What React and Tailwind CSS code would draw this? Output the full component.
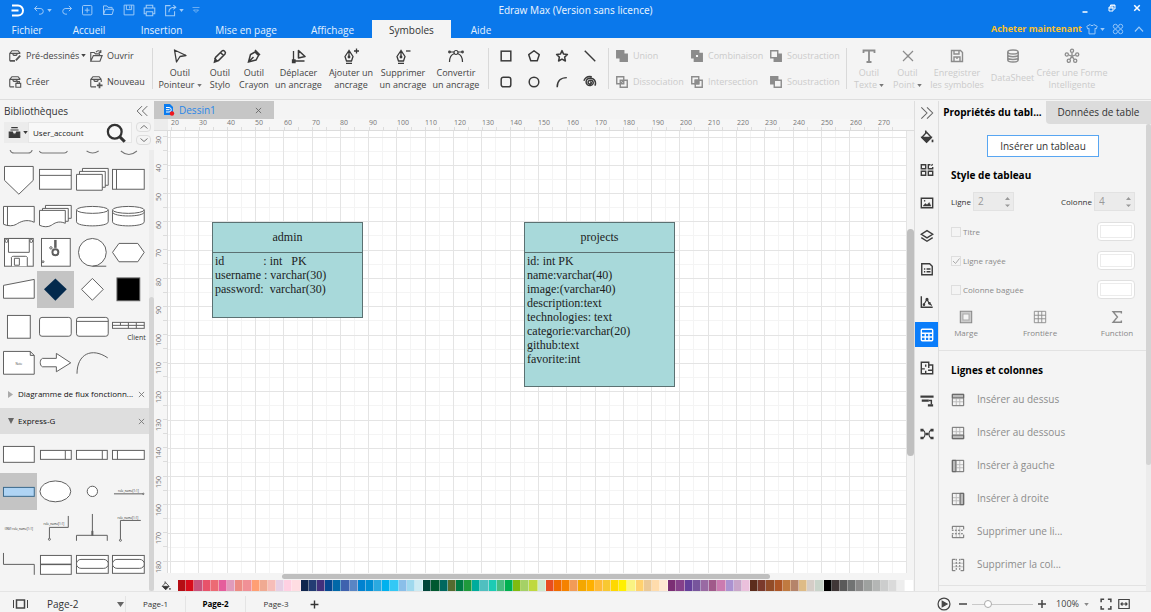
import React from "react";

/* ---------- drawing helpers ---------- */

function Ico({ s = 14, children, sw = 1.3, className = "", fill = "none" }) {
  return (
    <svg
      width={s}
      height={s}
      viewBox="0 0 16 16"
      fill={fill}
      stroke="currentColor"
      strokeWidth={sw}
      className={"shrink-0 " + className}
      aria-hidden="true"
    >
      {children}
    </svg>
  );
}

function Caret({ className = "" }) {
  return (
    <svg width="5" height="3" viewBox="0 0 6 4" fill="currentColor" className={"shrink-0 " + className} aria-hidden="true">
      <path d="M0 0h6L3 4z" />
    </svg>
  );
}

/* ---------- header ---------- */

const menuTabs = [
  ["Fichier", "w-[54px]"],
  ["Accueil", "w-[70px]"],
  ["Insertion", "w-[75px]"],
  ["Mise en page", "w-[94px]"],
  ["Affichage", "w-[79px]"],
  ["Symboles", "w-[79px]"],
  ["Aide", "w-[60px]"],
];

function Header() {
  return (
    <header className="bg-[#0a78eb] text-[#e3f0fd]">
      <div className="grid h-5 grid-cols-[1fr_auto_1fr] items-center">
        <div className="flex items-center pl-2.5 text-[#9fcbf8]">
          <svg width="15" height="13" viewBox="0 0 15 13" fill="none" stroke="#fff" strokeWidth="2" aria-hidden="true">
            <path d="M2 1.500h6a5 5 0 0 1 0 10H2M1.500 6.500h7" />
          </svg>
          <button aria-label="Annuler" className="ml-2 flex items-center gap-0.5">
            <Ico s={12}><path d="M5.500 2.500L2 6l3.500 3.500M2 6h8.500a3.800 3.800 0 0 1 0 7.500H8" /></Ico>
            <Caret />
          </button>
          <button aria-label="Rétablir" className="ml-[9px]">
            <Ico s={12}><path d="M10.500 2.500L14 6l-3.500 3.500M14 6H5.500a3.800 3.800 0 0 0 0 7.500H8" /></Ico>
          </button>
          <button aria-label="Nouveau" className="ml-2">
            <Ico s={12}><rect x="2" y="2" width="12.500" height="12.500" rx="1.500" /><path d="M8.200 5v6.500M5 8.200h6.500" /></Ico>
          </button>
          <button aria-label="Ouvrir" className="ml-[9px]">
            <Ico s={12}><path d="M2 14V2.500h4.500L8 4.500h5.500V7M2 14l2.500-7h11L13.500 14z" /></Ico>
          </button>
          <button aria-label="Enregistrer" className="ml-[9px]">
            <Ico s={12}><path d="M1.500 1.500h13v13h-13zM4.500 1.500v6h7v-6M9 3v3" /></Ico>
          </button>
          <button aria-label="Imprimer" className="ml-2">
            <Ico s={13}><path d="M4 5V1.500h8V5M4 12H1.500V5h13v7H12M4 9.500h8v5H4z" /></Ico>
          </button>
          <button aria-label="Exporter" className="ml-2 flex items-center gap-0.5">
            <Ico s={13}><path d="M8 2H2v12.500h11V9M6 10c0-4 3-6 8-6M11.500 1.500L14.500 4l-3 2.500" /></Ico>
            <Caret />
          </button>
          <button aria-label="Personnaliser" className="ml-2">
            <Ico s={8}><path d="M1 3h14M3 8l5 5 5-5z" /></Ico>
          </button>
        </div>
        <h1 className="font-sans text-[10px] leading-5">Edraw Max (Version sans licence)</h1>
        <div className="flex items-center justify-end gap-[17px] pr-2.5 text-white">
          <button aria-label="Réduire"><Ico s={8} sw={3}><path d="M3 12h10" /></Ico></button>
          <button aria-label="Restaurer" className="mb-1 ml-0.5"><Ico s={8} sw={2}><path d="M2 6h8v8H2zM2 8h8M5 5V2h9v8h-3M5 3.500h9" /></Ico></button>
          <button aria-label="Fermer" className="mb-1"><Ico s={8} sw={3}><path d="M2.500 2.500l11 11M13.500 2.500l-11 11" /></Ico></button>
        </div>
      </div>
      <div className="flex h-[18px] items-stretch text-[10px]">
        <nav className="flex">
          {menuTabs.map(([t, w]) => (
            <button
              key={t}
              className={w + " pt-px leading-4 " + (t === "Symboles" ? "bg-[#f4f4f4] text-[#333]" : "")}
            >
              {t}
            </button>
          ))}
        </nav>
        <div className="ml-auto flex items-center pr-[7px] text-[#9fcbf8]">
          <a href="#acheter" className="text-[9px] font-bold text-[#fbc02d]">Acheter maintenant</a>
          <button aria-label="Thème" className="ml-1 flex items-center gap-0.5">
            <Ico s={12}><path d="M5.500 2L1 4.500l1.500 3.500L4 7v7.500h8V7l1.500 1L15 4.500 10.500 2c-.5 2-4.500 2-5 0z" /></Ico>
            <Caret />
          </button>
          <button aria-label="Applications" className="ml-[7px]">
            <Ico s={12} sw={1.2}><circle cx="4.500" cy="4.500" r="2.800" /><circle cx="11.500" cy="4.500" r="2.800" /><circle cx="4.500" cy="11.500" r="2.800" /><circle cx="11.500" cy="11.500" r="2.800" /></Ico>
          </button>
          <button aria-label="Replier le ruban" className="ml-2.5">
            <Ico s={10} sw={1.8}><path d="M1.500 12L8 5l6.500 7" /></Ico>
          </button>
        </div>
      </div>
    </header>
  );
}

/* ---------- ribbon ---------- */

const boxBase = "M2 13.500V5l2.500-3h7L14 5M2 5h12M5.500 5c0 3 5 3 5 0";

function Divider() {
  return <div className="my-2.5 w-px bg-[#d9d9d9]" />;
}

function SmallCmd({ icon, children, caret }) {
  return (
    <button className="flex items-center gap-1 whitespace-nowrap">
      {icon}
      <span>{children}</span>
      {caret && <Caret className="-ml-0.5" />}
    </button>
  );
}

function Tool({ icon, lines, w, caret, disabled }) {
  return (
    <button
      disabled={disabled}
      className={w + " flex shrink-0 flex-col items-center pt-2.5 " + (disabled ? "text-[#cbcbcb]" : "text-[#444]")}
    >
      <span className={disabled ? "text-[#8c8c8c]" : "text-[#3a3a3a]"}>{icon}</span>
      <span className={"flex flex-col items-center whitespace-nowrap leading-3 " + (lines.length === 1 ? "pt-2" : "pt-[3px]")}>
        {lines.map((l, i) => (
          <span key={l} className="flex items-center gap-0.5">
            {l}
            {caret && i === lines.length - 1 && <Caret className="text-[#777]" />}
          </span>
        ))}
      </span>
    </button>
  );
}

const nib = (
  <>
    <path d="M8 1.500L4 7.500l1.500 4.500h5L12 7.500zM8 2v6M5 14.500h6" />
    <circle cx="8" cy="8" r=".8" />
  </>
);

function Ribbon() {
  return (
    <section className="flex h-[62px] border-b border-[#dedede] text-[9px] text-[#444]">
      <div className="grid w-[152px] shrink-0 grid-cols-[81px_auto] content-center justify-start gap-y-3 pl-2 leading-[14px]">
        <SmallCmd caret icon={<Ico s={14} className="text-[#555]"><path d={boxBase} /><path d="M2 13.500h6M9 13l5-5.500" strokeWidth="2" /></Ico>}>Pré-dessinés</SmallCmd>
        <SmallCmd icon={<Ico s={14} className="text-[#555]"><path d="M2 14V4h4l1.500 1.500H12V8M2 14l3-6.500h10L12.500 14zM8 3.500c2-2 4-2 5.500 0M13.500 1v3H11" /></Ico>}>Ouvrir</SmallCmd>
        <SmallCmd icon={<Ico s={14} className="text-[#555]"><path d={boxBase} /><path d="M2 13.500h5M9 9.500h5.500V14H9zM10.500 9.500v-2h2.500v2" /></Ico>}>Créer</SmallCmd>
        <SmallCmd icon={<Ico s={14} className="text-[#555]"><path d={boxBase} /><path d="M2 13.500h6M14 5v3" /><path d="M12 8.500v6.500M9 11.800h6.500" strokeWidth="2" /></Ico>}>Nouveau</SmallCmd>
      </div>
      <Divider />
      <div className="flex w-[335px] shrink-0 pl-1">
        <Tool w="w-[46px]" caret lines={["Outil", "Pointeur"]} icon={<Ico s={16}><path d="M2.500 2l11.500 5.500-6 1L4.500 14z" strokeLinejoin="round" /></Ico>} />
        <Tool w="w-[34px]" lines={["Outil", "Stylo"]} icon={<Ico s={16} sw={1.5}><path d="M2.500 14l1-4.500L10 3c1.500-1.500 4.500 1 3 3L6.500 12.500zM8.500 4.500l3 3M5 13l-2.500-3" /></Ico>} />
        <Tool w="w-[34px]" lines={["Outil", "Crayon"]} icon={<Ico s={16} sw={1.5}><path d="M2.500 14l2-7.500L9 4l3.500 3.500L10 12zM9 2l5 5M2.500 14l5-5" /></Ico>} />
        <Tool w="w-[55px]" lines={["Déplacer", "un ancrage"]} icon={<Ico s={16}><path d="M2.500 3v10h11M1.500 12h2.500v2.500H1.500z" /><path d="M7.500 2.500v7.500l6.500-1.500z" strokeWidth="1.600" strokeLinejoin="round" /></Ico>} />
        <Tool w="w-[50px]" lines={["Ajouter un", "ancrage"]} icon={<Ico s={16}><g transform="translate(-2 1)">{nib}</g><path d="M11 3h5M13.500 .5v5" /></Ico>} />
        <Tool w="w-[54px]" lines={["Supprimer", "un ancrage"]} icon={<Ico s={16}><g transform="translate(-2 1)">{nib}</g><path d="M11 3h4.500" /></Ico>} />
        <Tool w="w-[52px]" lines={["Convertir", "un ancrage"]} icon={<Ico s={16} sw={1.2}><path d="M1.500 14c0-4 1.500-7.500 5-8.500M14.500 14c0-4-1.500-7.500-5-8.500M2 4h4M10 4h4" /><circle cx="8" cy="4.500" r="2" /><circle cx="1.500" cy="4" r=".8" /><circle cx="14.500" cy="4" r=".8" /></Ico>} />
      </div>
      <Divider />
      <div className="grid w-[119px] shrink-0 grid-cols-[28px_28px_28px_28px] content-center gap-y-3 pl-[3px] text-[#3a3a3a]">
        {[
          ["Rectangle", <rect x="2.500" y="2.500" width="11" height="11" />],
          ["Pentagone", <path d="M8 2l6 4.500-2.300 7H4.300L2 6.500z" strokeLinejoin="round" />],
          ["Étoile", <path d="M8 1.800l1.800 4 4.400.5-3.200 3 .9 4.400L8 11.500l-3.900 2.200.9-4.400-3.200-3 4.400-.5z" strokeLinejoin="round" />],
          ["Ligne", <path d="M2 2l12 12" />],
          ["Rectangle arrondi", <rect x="2.500" y="2.500" width="11" height="11" rx="2.500" />],
          ["Ellipse", <circle cx="8" cy="8" r="5.500" />],
          ["Arc", <path d="M2.500 14c0-7 4-11 11-11" />],
          ["Spirale", <path d="M8 8.200c1.200-.6 2 .8 1 1.700s-3.200.3-3.200-1.500S7.500 5.800 9.300 6s3 2.400 2 4.300-4.300 2.500-6.300.8-2-5 .3-6.600 6.200-1 7.700 1.200 1.500 4.800.5 6.500M1 6.500c1.500-3.500 5-5.500 9-4.500" />],
        ].map(([n, d]) => (
          <button key={n} aria-label={n} className="flex h-3.5 items-center justify-center">
            <Ico s={14} sw={1.7}>{d}</Ico>
          </button>
        ))}
      </div>
      <Divider />
      <div className="grid w-[237px] shrink-0 grid-cols-[75px_79px_auto] content-center justify-start gap-y-3 pl-1.5 leading-[14px] text-[#cbcbcb]">
        {[
          ["Union", <><path d="M2 2h8v8H2zM6 6h8v8H6z" fill="currentColor" /></>],
          ["Combinaison", <path d="M2 2h8v3h4v9H5v-4H2zM6 6v4h4V6z" fill="currentColor" fillRule="evenodd" />],
          ["Soustraction", <><path d="M6 10v4h8V6h-4v4z" fill="currentColor" /><path d="M2 2h8v8H2z" /></>],
          ["Dissociation", <><path d="M2 2h8v8H2zM6 6h8v8H6zM6.500 9.500l3-3" /></>],
          ["Intersection", <><path d="M2 2h8v8H2zM6 6h8v8H6z" /><path d="M6 6h4v4H6z" fill="currentColor" /></>],
          ["Soustraction", <><path d="M2 2h8v4H6v4H2z" fill="currentColor" /><path d="M6 6h8v8H6z" /></>],
        ].map(([n, d], i) => (
          <button key={i} disabled className="flex items-center gap-1">
            <Ico s={14} sw={1.6} className="text-[#8c8c8c]">{d}</Ico>
            {n}
          </button>
        ))}
      </div>
      <Divider />
      <div className="flex pl-[3px]">
        <Tool disabled w="w-[38px]" caret lines={["Outil", "Texte"]} icon={<Ico s={16} sw={1.8}><path d="M2.500 5V2.500h11V5M8 2.500V14M5.500 14h5" /></Ico>} />
        <Tool disabled w="w-[39px]" caret lines={["Outil", "Point"]} icon={<Ico s={16} sw={1.2}><path d="M3 3l10 10M13 3L3 13" /><path d="M7 8h2" strokeWidth="2.500" /></Ico>} />
        <Tool disabled w="w-[60px]" lines={["Enregistrer", "les symboles"]} icon={<Ico s={16} sw={1.4}><path d="M2.500 2.500h9l2 2v9h-11zM5 2.500v3.500h5V2.500M5 13.500V9h6v4.500M8 9v2" /></Ico>} />
        <Tool disabled w="w-[51px]" lines={["DataSheet"]} icon={<Ico s={16} sw={1.5}><ellipse cx="8" cy="4" rx="5.200" ry="2" /><path d="M2.800 4v8c0 2.700 10.400 2.700 10.400 0V4M2.800 6.800c0 2.500 10.400 2.500 10.400 0M2.800 9.500c0 2.500 10.400 2.500 10.400 0" /></Ico>} />
        <Tool disabled w="w-[68px]" lines={["Créer une Forme", "Intelligente"]} icon={<Ico s={16} sw={1.3}><circle cx="8" cy="2.800" r="1.600" /><circle cx="2.800" cy="6.500" r="1.600" /><circle cx="13.200" cy="6.500" r="1.600" /><circle cx="4.800" cy="12.800" r="1.600" /><circle cx="11.200" cy="12.800" r="1.600" /><path d="M8 5v3M5 7l3 1.500L11 7M8 8.500L6 11M8 8.500l2 2.500" /></Ico>} />
      </div>
    </section>
  );
}

/* ---------- symbol library ---------- */

function Shape({ label, selected, children }) {
  return (
    <button
      aria-label={label}
      className={"flex items-center justify-center overflow-hidden " + (selected ? "bg-[#c4c4c4]" : "")}
    >
      <svg viewBox="0 0 37 37" className="h-full w-full" fill="#fff" stroke="#5f5f5f" strokeWidth="1" aria-hidden="true">
        {children}
      </svg>
    </button>
  );
}

const flowShapes = [
  ["Renvoi", <path d="M4.500 5.500h29v14l-14.500 14-14.500-14z" />],
  ["Cadre", <><rect x="2.500" y="8.500" width="32" height="20" /><path d="M2.500 14.500h32" /></>],
  ["Documents", <><path d="M8.500 7.500h26v17h-26z" /><path d="M5.500 10.500h26v16h-26z" /><path d="M2.500 13.500h26v16h-26z" /></>],
  ["Processus", <><rect x="2.500" y="8.500" width="32" height="20" /><path d="M6.500 8.500v20" /></>],
  ["Document", <><path d="M3.500 8.500h31v16c-8-4-15 0-18 2s-9 2-13 0z" /><path d="M7.500 8.500v19" /></>],
  ["Documents multiples", <><path d="M8.500 7.500h26v13h-26z" /><path d="M5.500 10.500h26v13h-26z" /><path d="M2.500 12.500h26v13c-7-3-11 0-14 2s-8 2-12 0z" /></>],
  ["Stockage", <><path d="M2.500 12v12c0 5.500 32 5.500 32 0V12" /><ellipse cx="18.500" cy="12" rx="16" ry="3.500" /></>],
  ["Base de données", <><path d="M2.500 12v12c0 5.500 32 5.500 32 0V12" /><path d="M2.500 14c0 5.500 32 5.500 32 0" /><ellipse cx="18.500" cy="12" rx="16" ry="3.500" /></>],
  ["Disquette", <><rect x="4.500" y="4.500" width="29" height="28" /><path d="M8.500 4.500h21v14h-21zM11.500 32.500v-9a2 2 0 0 1 2-1h12a2 2 0 0 1 2 1v9M14.500 24.500h5v7h-5z" /><circle cx="6.500" cy="7" r="1.500" /><circle cx="31.500" cy="7" r="1.500" /></>],
  ["Verrou", <><rect x="4.500" y="4.500" width="29" height="28" /><path d="M18.500 6v8" strokeWidth="2.500" /><circle cx="18.500" cy="18.500" r="3" strokeWidth="2" /><circle cx="14" cy="14" r="1.200" /><circle cx="6" cy="28" r="1" /></>],
  ["Bande", <><circle cx="18.500" cy="18.500" r="14" /><path d="M18.500 32.500h14" /></>],
  ["Hexagone", <path d="M9 9.500h19l6.500 9-6.500 9.500H9l-6.500-9.500z" />],
  ["Saisie manuelle", <path d="M3.500 14.500l31-6v19h-31z" />],
  ["Losange plein", <path d="M18.500 7.500l11.500 11-11.500 11.500L7 18.500z" fill="#042a4d" stroke="none" />, true],
  ["Losange", <path d="M18.500 7.500l11 11-11 11-11-11z" />],
  ["Carré plein", <rect x="7" y="7" width="23" height="23" fill="#000" />],
  ["Carré", <rect x="7.500" y="7.500" width="23" height="23" />],
  ["Rectangle arrondi", <rect x="2.500" y="9.500" width="32" height="19" rx="2.500" />],
  ["Cadre arrondi", <><rect x="2.500" y="9.500" width="32" height="19" rx="2.500" /><path d="M2.500 13.500h32" /></>],
  ["Client", <><rect x="2.500" y="14.500" width="32" height="6" /><path d="M2.500 17.500h32M10.500 14.500v3M18.500 14.500v6M26.500 14.500v6" /><text x="36" y="32" textAnchor="end" fontSize="7" fill="#333" stroke="none">Client</text></>],
  ["Note", <><path d="M3.500 7.500h27l4 4v19h-31zM30.500 7.500v4h4" /><text x="19" y="21" textAnchor="middle" fontSize="3" fill="#444" stroke="none">Note</text></>],
  ["Flèche", <path d="M5.500 14.500h14v-5l14.500 9.500-14.500 9v-5h-14c-3-1-3-7.500 0-8.500z" />],
  ["Courbe", <path d="M3 30C3 10 18 3 34 14" fill="none" />],
];

const expressShapes = [
  ["Entité", <rect x="3.500" y="10.500" width="31" height="16" />],
  ["Type simple", <><rect x="3.500" y="14.500" width="31" height="9" /><path d="M28.500 14.500v9" /></>],
  ["Type énuméré", <><rect x="2.500" y="14.500" width="31" height="9" /><path d="M28.500 14.500v9" /></>],
  ["Type sélection", <><rect x="2.500" y="14.500" width="32" height="9" /><path d="M7.500 14.500v9" /></>],
  ["Type défini", <rect x="3.500" y="14.500" width="31" height="9" fill="#afd4f4" stroke="#3b6a8c" />, true],
  ["Ellipse", <ellipse cx="18.500" cy="18.500" rx="15.500" ry="10.500" />],
  ["Cercle", <circle cx="18.500" cy="18.500" r="5.200" />],
  ["Relation", <><path d="M4 21h29" /><circle cx="33.500" cy="21" r=".7" /><text x="18.500" y="19" textAnchor="middle" fontSize="3" fill="#222" stroke="none">role_name[1:1]</text></>],
  ["Relation inverse", <text x="19" y="20" textAnchor="middle" fontSize="3" fill="#222" stroke="none">(INV) role_name[1:1]</text>],
  ["Connecteur", <><path d="M31.500 6v11.500h-19V29" fill="none" /><circle cx="12.500" cy="29.500" r="1" /><text x="17" y="15" textAnchor="middle" fontSize="3" fill="#222" stroke="none">role_name[1:1]</text></>],
  ["Arbre", <><path d="M18.500 4v21M2.500 31v-5.500h31V31" fill="none" /><path d="M18.500 21v5" strokeWidth="2" /></>],
  ["Connecteur nommé", <><path d="M31 10.500H10.500V30" fill="none" /><circle cx="10.500" cy="30.500" r="1" /><text x="18" y="9" textAnchor="middle" fontSize="3" fill="#222" stroke="none">role_name[1:1]</text></>],
  ["Coude", <path d="M3.500 7v11.500h31V29" fill="none" />],
  ["Schéma", <><rect x="3.500" y="9.500" width="31" height="19" /><path d="M3.500 18.500h31" strokeWidth="1.500" /></>],
  ["Référence", <><rect x="2.500" y="9.500" width="32" height="18" /><rect x="2.500" y="13.500" width="32" height="9" rx="4.500" /></>],
  ["Utilisation", <><rect x="2.500" y="9.500" width="32" height="18" /><rect x="2.500" y="13.500" width="32" height="9" rx="4.500" /></>],
];

function Library() {
  return (
    <aside className="flex w-[154px] shrink-0 flex-col overflow-hidden text-[#333]">
      <div className="flex h-[19px] shrink-0 items-center justify-between pl-1 pr-1.5">
        <h2 className="text-[10px] leading-4">Bibliothèques</h2>
        <button aria-label="Replier" className="text-[#666]"><Ico s={12}><path d="M8 1.500L1.500 8 8 14.500M15 1.500L8.500 8l6.500 6.500" /></Ico></button>
      </div>
      <div className="mt-0.5 flex h-[21px] shrink-0 items-stretch pl-1 pr-[3px]">
        <button aria-label="Choisir une bibliothèque" className="flex w-6 items-center gap-0.5 bg-[#ececec] pl-1 text-[#3a3a3a]">
          <Ico s={13} sw={1.3}><path d="M4 2h8M3 5h10" /><path d="M1.500 7.500h4L6.500 10h3l1-2.500h4v6.500h-13z" fill="currentColor" /></Ico>
          <Caret />
        </button>
        <label className="flex w-[104px] items-center border border-[#e6e6e6] bg-[#f8f8f8] pl-1">
          <input aria-label="Rechercher un symbole" defaultValue="User_account" className="w-full min-w-0 flex-1 bg-transparent text-[8px] text-[#222] outline-none" />
          <Ico s={20} sw={1.8} className="mr-[5px] text-[#333]"><circle cx="7" cy="7" r="5.500" /><path d="M11 11l4 4" strokeWidth="2.500" /></Ico>
        </label>
        <div className="ml-1 flex flex-1 flex-col gap-[3px] text-[#777]">
          <button aria-label="Précédent" className="flex flex-1 items-center justify-center rounded-sm border border-[#ddd]"><Ico s={8} sw={2}><path d="M1 11l7-6 7 6" /></Ico></button>
          <button aria-label="Suivant" className="flex flex-1 items-center justify-center rounded-sm border border-[#ddd]"><Ico s={8} sw={2}><path d="M1 5l7 6 7-6" /></Ico></button>
        </div>
      </div>
      <div className="mt-[7px] flex min-h-0 flex-1">
        <div className="flex min-w-0 flex-1 flex-col">
          <svg className="h-[11px] w-full shrink-0" viewBox="0 0 148 11" preserveAspectRatio="none" fill="none" stroke="#777" aria-hidden="true">
            <path d="M10 0q1 3 4 3h14q3 0 4-3M39 1q1 2 3 2h22q2 0 3-2M86 1q6 4 12 0M120 1q8 7 16 0" />
          </svg>
          <div className="grid h-[220px] shrink-0 grid-cols-4 grid-rows-6 pr-0.5">
            {flowShapes.map(([n, d, sel]) => (
              <Shape key={n} label={n} selected={sel}>{d}</Shape>
            ))}
          </div>
          <div className="flex h-[27px] shrink-0 items-center pb-px pl-2 pr-1">
            <svg width="5" height="7" viewBox="0 0 5 7" fill="#aaa" aria-hidden="true"><path d="M0 0l5 3.500L0 7z" /></svg>
            <span className="ml-[5px] flex-1 whitespace-nowrap text-[8px] leading-3 text-[#111]">Diagramme de flux fonctionn...</span>
            <button aria-label="Fermer Diagramme de flux" className="text-[#777]"><Ico s={7} sw={2}><path d="M2 2l12 12M14 2L2 14" /></Ico></button>
          </div>
          <div className="flex h-[26px] shrink-0 items-center bg-[#dedede] pl-2 pr-1">
            <svg width="6" height="6" viewBox="0 0 6 6" fill="#666" aria-hidden="true"><path d="M0 0h6L3 6z" /></svg>
            <span className="ml-1 flex-1 text-[8px] leading-3 text-[#111]">Express-G</span>
            <button aria-label="Fermer Express-G" className="text-[#777]"><Ico s={7} sw={2}><path d="M2 2l12 12M14 2L2 14" /></Ico></button>
          </div>
          <div className="mt-[2px] grid h-[147px] shrink-0 grid-cols-4 grid-rows-4 pr-0.5">
            {expressShapes.map(([n, d, sel]) => (
              <Shape key={n} label={n} selected={sel}>{d}</Shape>
            ))}
          </div>
        </div>
        <div className="flex w-[5px] flex-col justify-end bg-[#ececec]">
          <div className="h-2/3 rounded bg-[#d4d4d4]" />
        </div>
      </div>
    </aside>
  );
}

/* ---------- drawing area ---------- */

const STEP = 28.3;
const range = (n) => Array.from({ length: n }, (_, i) => i);

function TopRuler() {
  return (
    <svg className="block h-3 w-full" aria-hidden="true">
      <rect width="14" height="12" fill="#ececec" />
      {range(26).map((i) => {
        const x = Math.round(16.5 + i * STEP);
        return (
          <g key={i}>
            <path d={`M${x + 0.5} 8v4M${x + 14.5} 8v4`} stroke="#dcdcdc" />
            <text x={x} y="6" fontSize="7" fill="#777">{20 + i * 10}</text>
          </g>
        );
      })}
      <path d="M0 11.500h4000" stroke="#dcdcdc" />
    </svg>
  );
}

function SideRuler() {
  return (
    <svg className="block h-full w-3.5 shrink-0" aria-hidden="true">
      {range(16).map((i) => {
        const y = Math.floor(5.500 + i * STEP);
        return (
          <g key={i}>
            <path d={`M9 ${y + 0.5}h5M9 ${y + 14.5}h5`} stroke="#dcdcdc" />
            <text transform={`translate(7 ${y}) rotate(-90)`} textAnchor="end" fontSize="7" fill="#777">{30 + i * 10}</text>
          </g>
        );
      })}
      <path d="M13.500 0v4000" stroke="#dcdcdc" />
    </svg>
  );
}

function Grid() {
  return (
    <svg className="block h-full w-full" shapeRendering="crispEdges" aria-hidden="true">
      {range(70).map((i) => {
        const x = Math.round(2 + i * STEP);
        const y = Math.round(5.500 + i * STEP);
        return <path key={i} d={`M${x + 14.5} 0v2000M0 ${y + 14.5}h4000`} stroke="#f4f4f4" />;
      })}
      {range(70).map((i) => {
        const x = Math.round(2 + i * STEP);
        const y = Math.round(5.500 + i * STEP);
        return <path key={i} d={`M${x + 0.5} 0v2000M0 ${y + 0.5}h4000`} stroke="#e4e4e4" />;
      })}
    </svg>
  );
}

function Entity({ name, rows, place }) {
  return (
    <div className={"absolute border border-[#5b7172] bg-[#a8d9da] font-['Liberation_Serif',serif] text-[12px] text-[#1c1c1c] " + place}>
      <div className="flex h-[30px] items-center justify-center border-b border-[#5b7172] pb-0.5">{name}</div>
      <div className="whitespace-pre pl-0.5 pt-px leading-[14px]">
        {rows.map((r) => <div key={r}>{r}</div>)}
      </div>
    </div>
  );
}

const palette = (
  "b50d14 d70b1b c8527b e8526a ec6a74 e55d9c e09bbb ec8b83 f09096 ff9f73 f0aa92 f6bdb8 e6cfe4 ffd0e2 ffdde2 " +
  "10264e 233c73 42307c 064790 0068a8 3f62ae 5a85c4 0082d0 008dd3 2ba9e0 00b1ee 33c8f5 8abfe9 9fd9ee cdebf3 " +
  "00453a 00582f 00685f 556b2f 007a44 1f9a3c 00ac9c 50bfc0 1ccbb4 47bc80 00b050 81bb0f a5d166 bfd93e cee8cc " +
  "e84e20 f06a00 f58200 f29b58 f4a700 ffb000 ffba38 f8c832 ffd800 fff000 faf382 ffd16f ebc996 ffdcac ffe8d2 " +
  "7b2e74 86408a 65409a 77559c 996aa3 a15a8a cb7bb0 ab92d0 c8a5c9 ebc0dc " +
  "5c2c1c 7b3a2c 924c28 ad5526 c07a40 b5846a debb86 d5cdc7 c9d4ca " +
  "000000 403737 5a5a5a 717373 8a8a8a 9ea19f b4b6b5 cccdcd dadada ededed ffffff"
).split(" ");

const bucket = (
  <>
    <path d="M7.500 2.500L13 8.500 7.500 14 2 8.500zM6.500 .5v4" />
    <path d="M2.500 8.500h10L7.500 13.500z" fill="currentColor" />
    <path d="M14.300 11v3" strokeWidth="2" />
  </>
);

function Workspace() {
  return (
    <main className="flex min-w-0 flex-1 flex-col">
      <div className="flex h-[18px] shrink-0">
        <div className="flex w-[120px] items-center bg-[#c6c6c6] pl-[9px] pr-3">
          <svg width="12" height="12" viewBox="0 0 12 12" aria-hidden="true">
            <path d="M1 0h6l3 3v8H1z" fill="#0a7cf0" />
            <path d="M3 3.500h3a2 2 0 0 1 0 4.500H3M3 5.700h3.500" stroke="#fff" fill="none" />
            <circle cx="9" cy="9.500" r="2.200" fill="#f0151b" />
          </svg>
          <span className="ml-1 flex-1 text-[10px] leading-4 text-[#2a86e8]">Dessin1</span>
          <button aria-label="Fermer Dessin1" className="text-[#666]"><Ico s={7} sw={2}><path d="M2 2l12 12M14 2L2 14" /></Ico></button>
        </div>
      </div>
      <div className="h-3 shrink-0 overflow-hidden bg-[#f6f6f6]"><TopRuler /></div>
      <div className="flex min-h-0 flex-1">
        <div className="overflow-hidden bg-[#f6f6f6]"><SideRuler /></div>
        <div className="relative min-w-0 flex-1 overflow-hidden bg-white">
          <Grid />
          <Entity
            name="admin"
            place="left-[44px] top-[91px] h-[96px] w-[151px]"
            rows={["id             : int   PK", "username : varchar(30)", "password:  varchar(30)"]}
          />
          <Entity
            name="projects"
            place="left-[356px] top-[91px] h-[165px] w-[151px]"
            rows={["id: int PK", "name:varchar(40)", "image:(varchar40)", "description:text", "technologies: text", "categorie:varchar(20)", "github:text", "favorite:int"]}
          />
        </div>
        <div className="flex w-[7px] shrink-0 flex-col bg-[#f4f4f4]">
          <div className="flex-[98]" />
          <div className="flex-[226] rounded bg-[#bfbfbf]" />
          <div className="flex-[117]" />
        </div>
      </div>
      <div className="flex h-[7px] shrink-0 items-center bg-[#f4f4f4]">
        <div className="flex-[128]" />
        <div className="h-[5px] flex-[488] rounded bg-[#bfbfbf]" />
        <div className="flex-[144]" />
      </div>
      <div className="flex h-[11px] shrink-0">
        <button aria-label="Remplissage" className="flex w-6 items-center justify-center text-[#333]"><Ico s={10} sw={1.2}>{bucket}</Ico></button>
        <div className="flex min-w-0 flex-1">
          {palette.map((c, i) => (
            <button
              key={i}
              aria-label={"#" + c}
              className="min-w-0 flex-1 border-r border-white/40"
              style={{ backgroundColor: "#" + c }}
            />
          ))}
        </div>
      </div>
    </main>
  );
}

/* ---------- side strip ---------- */

const strip = [
  ["Remplissage", bucket],
  ["Thème", <path d="M1.500 2h5v4.500h-5zM12 2H9.500v4.500h5V4.500M13 3l1.500-1.500M1.500 9.500h5V14h-5zM9.500 9.500h5V14h-5z" />],
  ["Image", <><path d="M1.500 2.500h13v11h-13z" /><path d="M3.500 11.500l2.500-3 2 1.500 2.500-2.500 2 4z" fill="currentColor" strokeWidth=".5" /><path d="M4.500 5.500h1.500" /></>],
  ["Calques", <path d="M8 1.800L14.500 6 8 10.200 1.500 6zM1.500 9.800L8 14l6.500-4.200" />],
  ["Notes", <path d="M2 2h9l3 3v9.500H2zM4.500 8H6M7.500 8H12M4.500 11.200H6M7.500 11.200H12" />],
  ["Graphique", <><path d="M1.500 1.500v12.500h13" /><path d="M4 11.500L8 5l2.500 4.500L13.500 12" strokeWidth="1.200" /><circle cx="8" cy="5" r="1" fill="currentColor" /><circle cx="4.500" cy="11" r=".7" fill="currentColor" /><circle cx="10.800" cy="9.500" r=".8" fill="currentColor" /></>],
  ["Tableau", <><rect x="1.500" y="1.500" width="13" height="13" rx="1" /><path d="M1.500 6h13M1.500 10.200h13M6 6v8.500M10.200 6v8.500" /></>],
  ["Plan", <path d="M6.500 1.500h-5v13h13V4.500H10V8M6.500 1.500H10v3M6.500 4v2.500M1.500 9h4M6.500 14.500v-3.500M10 11.500V10.500h4.500" />],
  ["Gantt", <><path d="M0.500 3h15" strokeWidth="2.500" /><path d="M2 7.500h8M9 13h6" strokeWidth="2.500" /><path d="M10 7.500h3V12" /></>],
  ["Carte mentale", <><path d="M2.500 3.500c4.500 0 4 9 0 9M13.500 3.500c-4.500 0-4 9 0 9M5.500 8h5" strokeWidth="1.300" /><path d="M.5 3.500H4M12 3.500h3.500M.5 12.500H4M12 12.500h3.500M6.500 8h3" strokeWidth="3" /></>],
];

function SideStrip() {
  return (
    <nav className="flex w-[25px] shrink-0 flex-col overflow-hidden border-x border-[#dedede] text-[#3c3c3c]">
      <button aria-label="Replier" className="flex h-[23px] shrink-0 items-center justify-center text-[#666]">
        <Ico s={14} sw={1.2}><path d="M1.500 1.500L8 8l-6.500 6.500M8 1.500L14.500 8 8 14.500" /></Ico>
      </button>
      <div className="flex flex-col gap-2">
        {strip.map(([n, d]) => (
          <button
            key={n}
            aria-label={n}
            className={"flex h-[25px] items-center justify-center " + (n === "Tableau" ? "bg-[#0a7dfa] text-white" : "")}
          >
            <Ico s={14} sw={1.6}>{d}</Ico>
          </button>
        ))}
      </div>
    </nav>
  );
}

/* ---------- properties ---------- */

function Spinner({ id, label, value }) {
  return (
    <div className="flex items-center gap-0.5">
      <label htmlFor={id} className="text-[8px]">{label}</label>
      <div className="flex h-[19px] w-[41px] items-center border border-[#e2e2e2] bg-[#ebebeb] pl-1 pr-[3px] text-[#999]">
        <input id={id} defaultValue={value} disabled className="w-full min-w-0 flex-1 bg-transparent text-[10px]" />
        <svg width="5" height="12" viewBox="0 0 5 12" fill="#999" aria-hidden="true"><path d="M0 4l2.500-3L5 4zM0 8.500h5L2.500 11z" /></svg>
      </div>
    </div>
  );
}

function Check({ id, label, checked }) {
  return (
    <div className="flex h-[19px] items-center">
      <span className="grid">
        <input
          id={id}
          type="checkbox"
          disabled
          defaultChecked={checked}
          className="peer col-start-1 row-start-1 h-[10px] w-[10px] appearance-none border border-[#dedede] bg-[#f4f4f4]"
        />
        <svg viewBox="0 0 10 10" fill="none" stroke="#aaa" className="invisible col-start-1 row-start-1 h-[10px] w-[10px] peer-checked:visible" aria-hidden="true">
          <path d="M2 5l2.500 2.500L8.500 2.500" />
        </svg>
      </span>
      <label htmlFor={id} className="ml-0.5 text-[8px] text-[#8a8a8a]">{label}</label>
      <button aria-label={"Couleur " + label} disabled className="ml-auto h-[19px] w-[38px] rounded-sm border border-[#e0e0e0] bg-white p-0.5">
        <span className="block h-full border border-[#ececec]" />
      </button>
    </div>
  );
}

const gridLines = "M2 6.500h12M2 10h12M6 2v12M10 2v12";

const rowCmds = [
  ["Insérer au dessus", <><path d={gridLines} stroke="#bbb" /><path d="M1.500 1.500h13v4h-13z" fill="#bbb" /><path d="M1.500 1.500h13v13h-13z" /></>],
  ["Insérer au dessous", <><path d={gridLines} stroke="#bbb" /><path d="M1.500 10.500h13v4h-13z" fill="#bbb" /><path d="M1.500 1.500h13v13h-13z" /></>],
  ["Insérer à gauche", <><path d={gridLines} stroke="#bbb" /><path d="M1.500 1.500h4v13h-4z" fill="#bbb" /><path d="M1.500 1.500h13v13h-13z" /></>],
  ["Insérer à droite", <><path d={gridLines} stroke="#bbb" /><path d="M10.500 1.500h4v13h-4z" fill="#bbb" /><path d="M1.500 1.500h13v13h-13z" /></>],
  ["Supprimer une li...", <><path d="M6 2v12M10 2v12" stroke="#bbb" /><path d="M1.500 5V1.500h13V5M1.500 11v3.500h13V11" /><path d="M1 6h14M1 10h14" strokeDasharray="2 1.500" /></>],
  ["Supprimer la col...", <><path d="M2 6h12M2 10h12" stroke="#bbb" /><path d="M5 1.500H1.500v13H5M11 1.500h3.500v13H11" /><path d="M6 1v14M10 1v14" strokeDasharray="2 1.500" /></>],
];

function Properties() {
  return (
    <aside className="flex w-[212px] shrink-0 flex-col overflow-hidden text-[#333]">
      <div className="flex h-[23px] shrink-0 text-[10px]">
        <button className="flex-1 whitespace-nowrap font-bold text-black">Propriétés du tabl...</button>
        <button className="w-[105px] rounded-bl bg-[#dcdcdc]">Données de table</button>
      </div>
      <div className="flex min-h-0 flex-1">
        <div className="min-w-0 flex-1 overflow-hidden">
          <div className="pl-3 pr-[11px]">
            <div className="flex justify-center pt-[11px]">
              <button className="h-[22px] w-[112px] border border-[#58a6f2] bg-white text-[10px] leading-4">Insérer un tableau</button>
            </div>
            <h3 className="mt-[10px] text-[10px] font-bold leading-4 text-black">Style de tableau</h3>
            <div className="mt-[9px] flex justify-between">
              <Spinner id="ligne" label="Ligne" value="2" />
              <Spinner id="colonne" label="Colonne" value="4" />
            </div>
            <div className="mt-[11px] flex flex-col gap-2.5">
              <Check id="titre" label="Titre" />
              <Check id="rayee" label="Ligne rayée" checked />
              <Check id="baguee" label="Colonne baguée" />
            </div>
            <div className="mt-[11px] flex justify-between text-[8px] leading-3 text-[#888]">
              <button disabled className="flex w-[30px] flex-col items-center gap-[3px]">
                <Ico s={14} sw={1.2}><path d="M1.500 1.500h13v13h-13z" fill="#ccc" /><path d="M4.500 4.500h7v7h-7z" fill="#f4f4f4" stroke="#aaa" /></Ico>Marge
              </button>
              <button disabled className="flex w-10 flex-col items-center gap-[3px]">
                <Ico s={14} sw={1}><path d="M1.500 1.500h13v13h-13zM6 1.500v13M10 1.500v13M1.500 6h13M1.500 10h13" /></Ico>Frontière
              </button>
              <button disabled className="flex w-9 flex-col items-center gap-[3px]">
                <Ico s={14} sw={1.6}><path d="M13 4V2H3.500l5 6-5 6H13v-2" /></Ico>Function
              </button>
            </div>
          </div>
          <div className="mt-[11px] border-t border-[#e2e2e2]" />
          <div className="pl-3">
            <h3 className="mt-[11px] text-[10px] font-bold leading-4 text-black">Lignes et colonnes</h3>
            <ul className="mt-[5px]">
              {rowCmds.map(([n, d]) => (
                <li key={n}>
                  <button disabled className="flex h-[33px] items-center gap-3 text-[10px] text-[#8c8c8c]">
                    <Ico s={14} sw={1.1} className="text-[#666]">{d}</Ico>
                    {n}
                  </button>
                </li>
              ))}
            </ul>
          </div>
          <div className="mt-[4px] border-t border-[#e2e2e2]" />
        </div>
        <div className="w-[5px] shrink-0 bg-[#ececec]"><div className="h-[73%] rounded bg-[#d4d4d4]" /></div>
      </div>
    </aside>
  );
}

/* ---------- status bar ---------- */

function StatusBar() {
  return (
    <footer className="flex h-[21px] shrink-0 items-center border-t border-[#e4e4e4] pt-1 text-[#333]">
      <div className="flex w-[126px] items-center border-r border-[#e4e4e4] pl-3 leading-4">
        <svg width="17" height="10" viewBox="0 0 17 10" fill="none" stroke="#444" aria-hidden="true"><path d="M1.500 1v8M15.500 1v8" /><rect x="4.500" y="1" width="8" height="8" strokeWidth="1.500" /></svg>
        <button className="ml-[18px] flex flex-1 items-center justify-between pr-[1px] text-[10px]">
          Page-2
          <svg width="7" height="5" viewBox="0 0 7 5" fill="#666" aria-hidden="true"><path d="M0 0h7L3.500 5z" /></svg>
        </button>
      </div>
      <div className="flex text-[8px] leading-4">
        <button className="w-[60px] border-r border-[#e4e4e4]">Page-1</button>
        <button className="w-[60px] border-r border-[#e4e4e4] font-bold text-black">Page-2</button>
        <button className="w-[60px]">Page-3</button>
        <button aria-label="Ajouter une page" className="ml-1"><Ico s={9} sw={2.5}><path d="M8 1v14M1 8h14" /></Ico></button>
      </div>
      <div className="ml-auto flex items-center pr-[21px] text-[#444]">
        <button aria-label="Présentation"><Ico s={14} sw={1.4}><circle cx="8" cy="8" r="6.800" /><path d="M6 4.800v6.400L11.500 8z" fill="currentColor" /></Ico></button>
        <button aria-label="Zoom arrière" className="ml-2"><Ico s={8} sw={3}><path d="M0 8h16" /></Ico></button>
        <input
          type="range"
          aria-label="Zoom"
          min="0"
          max="100"
          defaultValue="22"
          className="mx-[5px] h-2 w-[61px] appearance-none bg-[linear-gradient(#c9c9c9,#c9c9c9)] bg-[length:100%_1px] bg-center bg-no-repeat [&::-webkit-slider-thumb]:h-2 [&::-webkit-slider-thumb]:w-2 [&::-webkit-slider-thumb]:appearance-none [&::-webkit-slider-thumb]:rounded-full [&::-webkit-slider-thumb]:border [&::-webkit-slider-thumb]:border-[#aaa] [&::-webkit-slider-thumb]:bg-white"
        />
        <button aria-label="Zoom avant"><Ico s={8} sw={3}><path d="M8 0v16M0 8h16" /></Ico></button>
        <button className="ml-2.5 flex items-center gap-[5px] text-[9px] leading-4">100%<Caret className="text-[#888]" /></button>
        <button aria-label="Plein écran" className="ml-[11px]"><Ico s={12} sw={2}><path d="M1.500 5.500v-4h4M10.500 1.500h4v4M14.500 10.500v4h-4M5.500 14.500h-4v-4" /></Ico></button>
        <button aria-label="Ajuster à la largeur" className="ml-1.5"><Ico s={12} sw={1.6}><path d="M1 2h14v12H1zM4 8h8M6 6L4 8l2 2M10 6l2 2-2 2" /></Ico></button>
      </div>
    </footer>
  );
}

export default function App() {
  return (
    <div className="flex h-screen flex-col overflow-hidden bg-[#f4f4f4] font-['Open_Sans','Noto_Sans',sans-serif]">
      <Header />
      <Ribbon />
      <div className="flex min-h-0 flex-1 pt-px">
        <Library />
        <Workspace />
        <SideStrip />
        <Properties />
      </div>
      <StatusBar />
    </div>
  );
}
